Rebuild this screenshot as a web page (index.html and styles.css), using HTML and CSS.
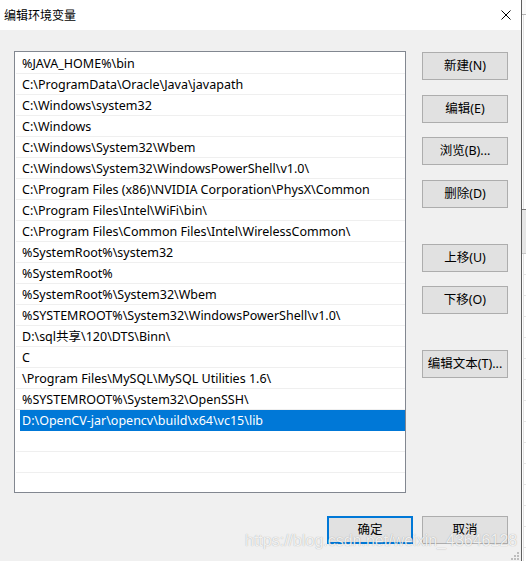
FILE: index.html
```html
<!DOCTYPE html>
<html lang="zh-CN">
<head>
<meta charset="utf-8">
<title>编辑环境变量</title>
<link rel="stylesheet" href="styles.css">
</head>
<body>
<div class="desk">
  <div class="dialog">
    <div class="titlebar">
      <span class="title">编辑环境变量</span>
      <svg class="close" width="10" height="10" viewBox="0 0 10 10"><path d="M0.5 0.5 L9.5 9.5 M9.5 0.5 L0.5 9.5" stroke="#000" stroke-width="1" fill="none"/></svg>
    </div>
    <div class="content">
      <div class="main">
        <div class="list">
          <div class="row">%JAVA_HOME%\bin</div>
          <div class="row">C:\ProgramData\Oracle\Java\javapath</div>
          <div class="row">C:\Windows\system32</div>
          <div class="row">C:\Windows</div>
          <div class="row">C:\Windows\System32\Wbem</div>
          <div class="row">C:\Windows\System32\WindowsPowerShell\v1.0\</div>
          <div class="row">C:\Program Files (x86)\NVIDIA Corporation\PhysX\Common</div>
          <div class="row">C:\Program Files\Intel\WiFi\bin\</div>
          <div class="row">C:\Program Files\Common Files\Intel\WirelessCommon\</div>
          <div class="row">%SystemRoot%\system32</div>
          <div class="row">%SystemRoot%</div>
          <div class="row">%SystemRoot%\System32\Wbem</div>
          <div class="row">%SYSTEMROOT%\System32\WindowsPowerShell\v1.0\</div>
          <div class="row">D:\sql共享\120\DTS\Binn\</div>
          <div class="row">C</div>
          <div class="row">\Program Files\MySQL\MySQL Utilities 1.6\</div>
          <div class="row">%SYSTEMROOT%\System32\OpenSSH\</div>
          <div class="row selected">D:\OpenCV-jar\opencv\build\x64\vc15\lib</div>
          <div class="row"></div>
          <div class="row"></div>
          <div class="row"></div>
        </div>
        <div class="side">
          <button class="btn first">新建(N)</button>
          <button class="btn">编辑(E)</button>
          <button class="btn tight">浏览(B)...</button>
          <button class="btn">删除(D)</button>
          <button class="btn group">上移(U)</button>
          <button class="btn tight">下移(O)</button>
          <button class="btn group">编辑文本(T)...</button>
        </div>
      </div>
      <div class="footer">
        <button class="btn default">确定</button>
        <button class="btn">取消</button>
      </div>
      <svg class="grip" width="8" height="8" viewBox="0 0 8 8">
        <rect x="6" y="0" width="2" height="2" fill="#bdbdbd"/>
        <rect x="3" y="3" width="2" height="2" fill="#bdbdbd"/>
        <rect x="6" y="3" width="2" height="2" fill="#bdbdbd"/>
        <rect x="0" y="6" width="2" height="2" fill="#bdbdbd"/>
        <rect x="3" y="6" width="2" height="2" fill="#bdbdbd"/>
        <rect x="6" y="6" width="2" height="2" fill="#bdbdbd"/>
      </svg>
    </div>
  </div>
  <div class="bgwin">
    <div class="bg-top"></div>
    <div class="bg-mid"></div>
    <div class="bg-head"></div>
    <div class="bg-rows"></div>
  </div>
  <div class="watermark">https://blog.csdn.net/weixin_43646128</div>
</div>
</body>
</html>
```
FILE: styles.css
```css
* { box-sizing: border-box; }
html, body { margin: 0; padding: 0; }
body {
  width: 526px;
  height: 561px;
  overflow: hidden;
  background: #f0f0f0;
  font-family: "Noto Sans", "Noto Sans CJK SC", sans-serif;
  font-size: 12px;
  color: #000;
}
.desk {
  position: relative;
  display: flex;
  width: 526px;
  height: 561px;
}
.dialog {
  width: 522px;
  height: 561px;
  border-right: 1px solid #5e5e5e;
  background: #f0f0f0;
  display: flex;
  flex-direction: column;
  flex: none;
}
.titlebar {
  height: 30px;
  background: #fff;
  display: flex;
  align-items: center;
  justify-content: space-between;
  padding: 0 10px 1px 4px;
  flex: none;
}
.title {
  font-family: "Noto Sans CJK SC", sans-serif;
  font-size: 12px;
  line-height: 14px;
}
.close { display: block; }
.content {
  position: relative;
  flex: 1;
  padding: 21px 13px 0 14px;
}
.main {
  display: flex;
  gap: 16px;
}
.list {
  width: 392px;
  height: 442px;
  background: #fff;
  border: 1px solid #828790;
  padding: 1px 0 0 1px;
  overflow: hidden;
  flex: none;
  font-size: 12.5px;
}
.row {
  height: 21px;
  line-height: 21px;
  border-bottom: 1px solid #efefef;
  padding-left: 6px;
  white-space: nowrap;
  overflow: hidden;
}
.row.selected {
  margin-left: 4px;
  padding-left: 2px;
  background: #0078d7;
  color: #fff;
  border-bottom-color: #0078d7;
}
.side {
  display: flex;
  flex-direction: column;
  width: 86px;
}
.btn {
  width: 86px;
  height: 28px;
  margin: 15px 0 0;
  padding: 0;
  background: #e1e1e1;
  border: 1px solid #adadad;
  font-family: "Noto Sans", "Noto Sans CJK SC", sans-serif;
  font-size: 12.5px;
  color: #000;
  line-height: 26px;
  text-align: center;
}
.side .btn.first { margin-top: 1px; }
.side .btn.tight { margin-top: 14px; }
.side .btn.group { margin-top: 36px; }
.footer {
  display: flex;
  justify-content: flex-end;
  gap: 9px;
  margin-top: 23px;
}
.footer .btn { margin: 0; }
.btn.default {
  border: 2px solid #0078d7;
  line-height: 24px;
}
.grip {
  position: absolute;
  right: 2px;
  bottom: 1px;
}
.bgwin {
  flex: 1;
  height: 561px;
  background: #fff;
  display: flex;
  flex-direction: column;
}
.bg-top {
  height: 15px;
  background: #fafafa;
  border-bottom: 1px solid #b5b5b5;
}
.bg-mid {
  height: 194px;
  border-left: 1px solid #e3e3e3;
  margin-left: 1px;
}
.bg-head {
  height: 45px;
  background: #e6e6e6;
  border-top: 1px solid #7a7a7a;
  border-bottom: 1px solid #c8c8c8;
}
.bg-rows {
  flex: 1;
  border-left: 1px solid #e3e3e3;
  margin-left: 1px;
  background: repeating-linear-gradient(#fff 0 20px, #e6e6e6 20px 21px);
}
.watermark {
  position: absolute;
  left: 245px;
  top: 532px;
  font-family: "Liberation Sans", sans-serif;
  font-size: 16px;
  line-height: 18px;
  color: rgba(255, 255, 255, 0.85);
  text-shadow: 0 0 1px rgba(0, 0, 0, 0.35);
  white-space: nowrap;
}
```
